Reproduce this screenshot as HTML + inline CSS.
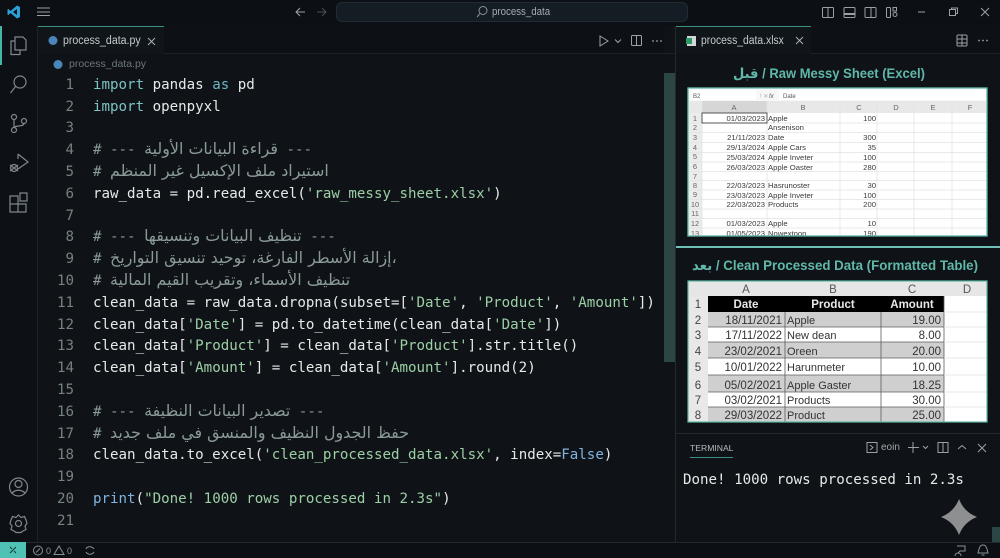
<!DOCTYPE html>
<html><head><meta charset="utf-8">
<style>
html,body{margin:0;padding:0;width:1000px;height:558px;overflow:hidden;background:#0f1317}
body{position:relative;font-family:"Liberation Sans",sans-serif}
#w{position:absolute;left:0;top:0;width:1000px;height:558px;filter:blur(.3px);overflow:hidden}
.a{position:absolute}
.ln{position:absolute;left:50px;width:24px;text-align:right;font:14.15px/21.8px "DejaVu Sans Mono",monospace;color:#76827f;margin-top:2px}
.c{position:absolute;left:93px;white-space:pre;font:14.15px/21.8px "DejaVu Sans Mono","DejaVu Sans",monospace;color:#e6e9e8;direction:ltr;margin-top:2px}
.c.m{margin-top:0}
.k{color:#7cc3c3}.s{color:#9ccfa6}.m{color:#8a9a98}.b{color:#7fb2e0}.f{color:#6fb5c5}
.ar{font-family:"DejaVu Sans",sans-serif;font-size:15.9px}
svg{position:absolute;left:0;top:0}
.sx{transform-origin:left center;white-space:pre}
</style></head><body><div id="w">
<div class="a" style="left:0;top:0;width:1000px;height:26px;background:#0c1014"></div>
<div class="a" style="left:0;top:26px;width:37px;height:516px;background:#0d1116"></div>
<div class="a" style="left:37px;top:26px;width:1px;height:516px;background:#1c2226"></div>
<div class="a" style="left:38px;top:26px;width:626px;height:28px;background:#0d1116"></div>
<div class="a" style="left:38px;top:53px;width:637px;height:1px;background:#1b2125"></div>
<div class="a" style="left:38px;top:26px;width:126px;height:28px;background:#10151a;border-top:1px solid #3d8f86;box-sizing:border-box"></div>
<div class="a" style="left:675px;top:26px;width:325px;height:28px;background:#0d1116;border-bottom:1px solid #1b2125;box-sizing:border-box"></div>
<div class="a" style="left:675px;top:26px;width:136px;height:28px;background:#10151a;border-top:1px solid #3d8f86;box-sizing:border-box"></div>
<div class="a" style="left:675px;top:26px;width:1px;height:516px;background:#222a2e"></div>
<div class="a" style="left:664px;top:73px;width:11px;height:289px;background:#2c4645"></div>
<div class="a" style="left:676px;top:246px;width:324px;height:2px;background:#6fc0b4"></div>
<div class="a" style="left:676px;top:433px;width:324px;height:1px;background:#232a2e"></div>
<div class="a" style="left:0;top:26px;width:2px;height:39px;background:#45b5a6"></div>
<div class="a" style="left:0;top:542px;width:1000px;height:16px;background:#0c1014;border-top:1px solid #232a2e;box-sizing:border-box"></div>
<div class="a" style="left:0;top:542px;width:26px;height:16px;background:#4fc1b5"></div>
<div class="a" style="left:992px;top:527px;width:8px;height:15px;background:#2c4645"></div>
<div class="a" style="left:336px;top:2px;width:352px;height:20px;background:#141c24;border:1px solid #222b33;box-sizing:border-box;border-radius:6px"></div>
<div class="a sx" style="left:492px;top:5px;font-size:11px;line-height:14px;color:#a6adb0;transform:scaleX(.88)">process_data</div>
<div class="a sx" style="left:63px;top:34px;font-size:11.5px;line-height:15px;color:#c4cacb;transform:scaleX(.92)">process_data.py</div>
<div class="a" style="left:69px;top:57px;font-size:10.5px;line-height:14px;color:#6d7779">process_data.py</div>
<div class="a sx" style="left:701px;top:34px;font-size:11.5px;line-height:15px;color:#c4cacb;transform:scaleX(.9)">process_data.xlsx</div>
<div class="a sx" style="left:733px;top:64px;font-size:14px;line-height:18px;font-weight:bold;color:#5fb8a8;transform:scaleX(.93)"><span style="font-family:'DejaVu Sans',sans-serif">قبل</span> / Raw Messy Sheet (Excel)</div>
<div class="a sx" style="left:692px;top:256px;font-size:14px;line-height:18px;font-weight:bold;color:#5fb8a8;transform:scaleX(.95)"><span style="font-family:'DejaVu Sans',sans-serif">بعد</span> / Clean Processed Data (Formatted Table)</div>
<div class="a" style="left:690px;top:442px;font-size:8.6px;line-height:12px;color:#b5bcbd">TERMINAL</div>
<div class="a" style="left:690px;top:457px;width:43px;height:1px;background:#3d8f86"></div>
<div class="a" style="left:881px;top:441px;font-size:10px;line-height:13px;color:#a0a7a9">eoin</div>
<div class="a" style="left:683px;top:470px;white-space:pre;font:14.15px/20px 'DejaVu Sans Mono',monospace;color:#e6e9e8">Done! 1000 rows processed in 2.3s</div>

<div class="ln" style="top:73px">1</div><div class="ln" style="top:95px">2</div><div class="ln" style="top:116px">3</div><div class="ln" style="top:138px">4</div><div class="ln" style="top:160px">5</div><div class="ln" style="top:182px">6</div><div class="ln" style="top:204px">7</div><div class="ln" style="top:225px">8</div><div class="ln" style="top:247px">9</div><div class="ln" style="top:269px">10</div><div class="ln" style="top:291px">11</div><div class="ln" style="top:313px">12</div><div class="ln" style="top:334px">13</div><div class="ln" style="top:356px">14</div><div class="ln" style="top:378px">15</div><div class="ln" style="top:400px">16</div><div class="ln" style="top:422px">17</div><div class="ln" style="top:443px">18</div><div class="ln" style="top:465px">19</div><div class="ln" style="top:487px">20</div><div class="ln" style="top:509px">21</div>

<div class="c" style="top:73px"><span class="k">import</span> pandas <span class="f">as</span> pd</div>
<div class="c" style="top:95px"><span class="k">import</span> openpyxl</div>
<div class="c m" style="top:138px"># --- <span class="ar">قراءة البيانات الأولية</span> ---</div>
<div class="c m" style="top:160px"># <span class="ar">استيراد ملف الإكسيل غير المنظم</span></div>
<div class="c" style="top:182px">raw_data = pd.read_excel(<span class="s">'raw_messy_sheet.xlsx'</span>)</div>
<div class="c m" style="top:225px"># --- <span class="ar">تنظيف البيانات وتنسيقها</span> ---</div>
<div class="c m" style="top:247px"># <span class="ar">إزالة الأسطر الفارغة، توحيد تنسيق التواريخ،</span></div>
<div class="c m" style="top:269px"># <span class="ar">تنظيف الأسماء، وتقريب القيم المالية</span></div>
<div class="c" style="top:291px">clean_data = raw_data.dropna(subset=[<span class="s">'Date'</span>, <span class="s">'Product'</span>, <span class="s">'Amount'</span>])</div>
<div class="c" style="top:313px">clean_data[<span class="s">'Date'</span>] = pd.to_datetime(clean_data[<span class="s">'Date'</span>])</div>
<div class="c" style="top:334px">clean_data[<span class="s">'Product'</span>] = clean_data[<span class="s">'Product'</span>].str.title()</div>
<div class="c" style="top:356px">clean_data[<span class="s">'Amount'</span>] = clean_data[<span class="s">'Amount'</span>].round(2)</div>
<div class="c m" style="top:400px"># --- <span class="ar">تصدير البيانات النظيفة</span> ---</div>
<div class="c m" style="top:422px"># <span class="ar">حفظ الجدول النظيف والمنسق في ملف جديد</span></div>
<div class="c" style="top:443px">clean_data.to_excel(<span class="s">'clean_processed_data.xlsx'</span>, index=<span class="b">False</span>)</div>
<div class="c" style="top:487px"><span class="b">print</span>(<span class="s">"Done! 1000 rows processed in 2.3s"</span>)</div>

<svg width="1000" height="558" viewBox="0 0 1000 558" font-family="Liberation Sans, sans-serif">
<!-- sheet 1 -->
<rect x="688" y="88" width="299" height="148" fill="#fff" stroke="#5fb8a8" stroke-width="1.2"/>
<rect x="689" y="89" width="297" height="12" fill="#f7f7f7"/>
<rect x="692" y="90" width="64" height="10" fill="#fff"/><rect x="779" y="90" width="207" height="10" fill="#fff"/>
<text x="693" y="98" font-size="6" fill="#555">B2</text><text x="783" y="98" font-size="6" fill="#555">Date</text>
<text x="760" y="98" font-size="6" fill="#aaa">!  ✕ ✓</text><text x="769" y="98" font-size="6" fill="#666" font-style="italic">fx</text>
<rect x="689" y="101" width="297" height="12" fill="#e8e8e8"/>
<rect x="702" y="101" width="65" height="12" fill="#d6d6d6"/>
<rect x="689" y="113" width="13" height="123" fill="#ececec"/>
<g stroke="#e2e2e2" stroke-width=".7">
<path d="M689 123H986M689 132.500H986M689 142.500H986M689 152.500H986M689 162H986M689 171.500H986M689 180.500H986M689 190H986M689 199.500H986M689 209H986M689 218.500H986M689 228H986M767 101V236M840 101V236M877 101V236M914 101V236M952 101V236M702 101V236"/>
</g>
<rect x="702" y="113" width="65" height="10" fill="none" stroke="#444" stroke-width=".9"/>
<g font-size="7.500" fill="#666" text-anchor="middle"><text x="734" y="110">A</text><text x="803" y="110">B</text><text x="859" y="110">C</text><text x="896" y="110">D</text><text x="933" y="110">E</text><text x="970" y="110">F</text>
<text x="695" y="121">1</text><text x="695" y="130">2</text><text x="695" y="140">3</text><text x="695" y="150">4</text><text x="695" y="159">5</text><text x="695" y="169">6</text><text x="695" y="179">7</text><text x="695" y="188">8</text><text x="695" y="197">9</text><text x="695" y="207">10</text><text x="695" y="216">11</text><text x="695" y="226">12</text><text x="695" y="236">13</text></g>
<g font-size="7.700" fill="#3a3a3a" text-anchor="end"><text x="765" y="121">01/03/2023</text><text x="765" y="140">21/11/2023</text><text x="765" y="150">29/13/2024</text><text x="765" y="160">25/03/2024</text><text x="765" y="170">26/03/2023</text><text x="765" y="188">22/03/2023</text><text x="765" y="198">23/03/2023</text><text x="765" y="207">22/03/2023</text><text x="765" y="226">01/03/2023</text><text x="765" y="236">01/05/2023</text>
<text x="876" y="121">100</text><text x="876" y="140">300</text><text x="876" y="150">35</text><text x="876" y="160">100</text><text x="876" y="170">280</text><text x="876" y="188">30</text><text x="876" y="198">100</text><text x="876" y="207">200</text><text x="876" y="226">10</text><text x="876" y="236">190</text></g>
<g font-size="7.700" fill="#3a3a3a"><text x="768" y="121">Apple</text><text x="768" y="130">Ansenison</text><text x="768" y="140">Date</text><text x="768" y="150">Apple Cars</text><text x="768" y="160">Apple Inveter</text><text x="768" y="170">Apple Oaster</text><text x="768" y="188">Hasrunoster</text><text x="768" y="198">Apple Inveter</text><text x="768" y="207">Products</text><text x="768" y="226">Apple</text><text x="768" y="236">Nowextoon</text></g>
<rect x="676" y="236.700" width="324" height="3" fill="#0f1317"/>
<rect x="688" y="88" width="299" height="148" fill="none" stroke="#5fb8a8" stroke-width="1.2"/>
<!-- sheet 2 -->
<rect x="688" y="281" width="299" height="141" fill="#fff"/>
<rect x="688" y="281" width="299" height="15" fill="#e6e6e6"/>
<rect x="688" y="296" width="20" height="126" fill="#e8e8e8"/>
<rect x="708" y="296" width="236" height="16" fill="#000"/>
<g fill="#cfcfcf"><rect x="708" y="312" width="236" height="15"/><rect x="708" y="342" width="236" height="16"/><rect x="708" y="375" width="236" height="17"/><rect x="708" y="407" width="236" height="15"/></g>
<path d="M708 327H944M708 342H944M708 358H944M708 375H944M708 392H944M708 407H944M785 312V422M881 312V422M944 296V422" stroke="#5a5f60" stroke-width=".8" fill="none"/>
<path d="M944 312H987M944 327H987M944 342H987M944 358H987M944 375H987M944 392H987M944 407H987" stroke="#e0e0e0" stroke-width=".7"/>
<g font-size="11.500" fill="#555" text-anchor="middle"><text x="746" y="293">A</text><text x="833" y="293">B</text><text x="912" y="293">C</text><text x="967" y="293">D</text></g>
<g font-size="11.500" fill="#444" text-anchor="middle"><text x="698" y="308">1</text><text x="698" y="324">2</text><text x="698" y="339">3</text><text x="698" y="355">4</text><text x="698" y="371">5</text><text x="698" y="389">6</text><text x="698" y="404">7</text><text x="698" y="419">8</text></g>
<g font-size="11.500" font-weight="bold" fill="#e8e8e8" text-anchor="middle"><text x="746" y="308">Date</text><text x="833" y="308">Product</text><text x="912" y="308">Amount</text></g>
<g font-size="11.500" fill="#333" text-anchor="end"><text x="782" y="324">18/11/2021</text><text x="782" y="339">17/11/2022</text><text x="782" y="355">23/02/2021</text><text x="782" y="371">10/01/2022</text><text x="782" y="389">05/02/2021</text><text x="782" y="404">03/02/2021</text><text x="782" y="419">29/03/2022</text>
<text x="941" y="324">19.00</text><text x="941" y="339">8.00</text><text x="941" y="355">20.00</text><text x="941" y="371">10.00</text><text x="941" y="389">18.25</text><text x="941" y="404">30.00</text><text x="941" y="419">25.00</text></g>
<g font-size="11" fill="#333"><text x="787" y="324">Apple</text><text x="787" y="339">New dean</text><text x="787" y="355">Oreen</text><text x="787" y="371">Harunmeter</text><text x="787" y="389">Apple Gaster</text><text x="787" y="404">Products</text><text x="787" y="419">Product</text></g>
<rect x="688" y="281" width="299" height="141" fill="none" stroke="#5fb8a8" stroke-width="1.2"/>
<!-- star -->
<path d="M959 499Q964 512 977 517Q964 522 959 535Q954 522 941 517Q954 512 959 499Z" fill="#8d8f90"/>
<!-- vscode logo -->
<path d="M17 5.500L20 7V17L17 18.500L10.500 13L8.500 15L7.500 14.500V9.500L8.500 9L10.500 11ZM17 9L13 12L17 15Z" fill="#2f9fd8"/>
<!-- menu -->
<path d="M37 8H50M37 12H50M37 15.500H50" stroke="#9aa1a4" stroke-width="1"/>
<!-- nav arrows -->
<path d="M305 12H296M300 8L296 12L300 16" stroke="#9aa1a4" fill="none"/>
<path d="M317 12H326M322 8L326 12L322 16" stroke="#4a5053" fill="none"/>
<!-- search icon -->
<circle cx="483" cy="10.500" r="4" stroke="#8a9194" fill="none"/><path d="M480 13.500L477 17" stroke="#8a9194"/>
<!-- window controls -->
<g stroke="#9aa1a4" fill="none">
<rect x="822.500" y="7.500" width="11" height="10" rx="1"/><path d="M828 7.500V17.500"/>
<rect x="844" y="7.500" width="11" height="10" rx="1"/><path d="M844 14H855" stroke-width="2"/>
<rect x="865" y="7.500" width="11" height="10" rx="1"/><path d="M871 7.500V17.500"/>
<rect x="886.500" y="7.500" width="4" height="10" rx="1"/><rect x="893" y="7.500" width="3.500" height="3.500"/><circle cx="895" cy="14.500" r="2"/>
<path d="M918 12H925"/><rect x="949.500" y="9.500" width="6" height="6"/><path d="M951.500 9.500V8H957.500V13.500H955.500"/>
<path d="M981 8L989 16M989 8L981 16"/>
</g>
<!-- activity icons -->
<g stroke="#7f888b" fill="none" stroke-width="1.200">
<path d="M15 37H23L26 40V50H15ZM15 41H11V54.500H20V50"/>
<circle cx="20" cy="82" r="6"/><path d="M15.500 86.500L10.500 93"/>
<circle cx="14" cy="117" r="2.500"/><circle cx="14" cy="130" r="2.500"/><circle cx="24" cy="121" r="2.500"/><path d="M14 119.500V127.500M24 123.500C24 127 14 125 14 128"/>
<path d="M18 154L28 162L18 169M18 154V159"/><circle cx="14" cy="168" r="3.500"/><path d="M10 165L18 171M10 171L18 165"/>
<path d="M10 196H18V204H10ZM18 204H26V212H18ZM10 204H18V212H10ZM20 193H27V201H20Z"/>
<circle cx="18.500" cy="487" r="9"/><circle cx="18.500" cy="484" r="3.500"/><path d="M12 494C13 489 24 489 25 494"/>
<circle cx="18.500" cy="523.500" r="3"/><path d="M18.500 515L21 517.500L24.500 516.500L26 520L27 523.500L25 526L26 529.500L23 531L21 532.500H16L14 531L11 529.500L12 526L10 523.500L11 520L12.500 516.500L16 517.500Z"/>
</g>
<!-- py icons -->
<g fill="#4a86b8"><circle cx="53" cy="40.500" r="4.500"/><circle cx="58" cy="64.500" r="4.500"/></g>
<path d="M148 38L155 45M155 38L148 45" stroke="#aab0b3" fill="none"/>
<!-- xlsx icon -->
<rect x="687" y="36" width="9" height="10" fill="#cfd8d5"/><rect x="686" y="38" width="6" height="6" fill="#2d9a66"/>
<path d="M796 37L803 44M803 37L796 44" stroke="#aab0b3"/>
<!-- editor actions -->
<g stroke="#9aa1a4" fill="none"><path d="M600 36L608 41L600 46Z"/><path d="M615 39.500L618 42.500L621 39.500"/><rect x="631.500" y="35.500" width="10" height="10" rx="1"/><path d="M636.500 35.500V45.500"/></g>
<g fill="#9aa1a4"><circle cx="653" cy="41" r=".9"/><circle cx="657" cy="41" r=".9"/><circle cx="661" cy="41" r=".9"/><circle cx="979" cy="40.500" r=".9"/><circle cx="983" cy="40.500" r=".9"/><circle cx="987" cy="40.500" r=".9"/></g>
<g stroke="#9aa1a4" fill="none"><rect x="957" y="35" width="10" height="11" rx="1"/><path d="M957 39H967M957 43H967M962 35V46"/></g>
<!-- terminal bar -->
<g stroke="#9aa1a4" fill="none"><rect x="867" y="442.500" width="10" height="10"/><path d="M870 445L873 447.500L870 450"/><path d="M913 442V453M908 447.500H919"/><path d="M923 446L925.500 448.500L928 446"/><rect x="938" y="442.500" width="10" height="10"/><path d="M943 442.500V452.500"/><path d="M958 449L962 445.500L966 449"/><path d="M978 444L986 452M986 444L978 452"/></g>
<!-- status -->
<path d="M10 553L16 547M10 547L12 549M14 551L16 553" stroke="#0d3b36" stroke-width="1"/>
<g stroke="#8a9194" fill="none"><circle cx="38" cy="550.500" r="4.500"/><path d="M36 552.500L40 548.500"/><path d="M59 546L64 554.500H54Z"/><path d="M86 549C87 546 92 546 94 549M86 552C88 555 92 555 94 552"/>
<path d="M957 546H965V551H960L958 553M955 556C955 552 961 552 961 556"/><path d="M983 545C979 545 979 550 978 553H988C987 550 987 545 983 545ZM981.500 555H984.500"/></g>
<g font-size="9" fill="#8a9194"><text x="46" y="554">0</text><text x="67" y="554">0</text></g>
</svg>
</div></body></html>
